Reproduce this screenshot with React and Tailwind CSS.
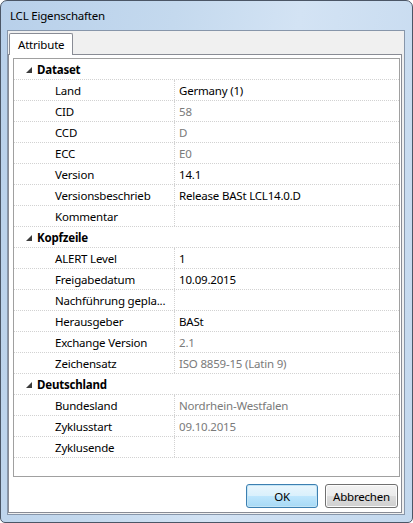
import React from 'react';

const rows = [
  { cat: 'Dataset' },
  { name: 'Land', value: 'Germany (1)' },
  { name: 'CID', value: '58', ro: true },
  { name: 'CCD', value: 'D', ro: true },
  { name: 'ECC', value: 'E0', ro: true },
  { name: 'Version', value: '14.1' },
  { name: 'Versionsbeschrieb', value: 'Release BASt LCL14.0.D' },
  { name: 'Kommentar', value: '' },
  { cat: 'Kopfzeile' },
  { name: 'ALERT Level', value: '1' },
  { name: 'Freigabedatum', value: '10.09.2015' },
  { name: 'Nachführung gepla...', value: '' },
  { name: 'Herausgeber', value: 'BASt' },
  { name: 'Exchange Version', value: '2.1', ro: true },
  { name: 'Zeichensatz', value: 'ISO 8859-15 (Latin 9)', ro: true },
  { cat: 'Deutschland' },
  { name: 'Bundesland', value: 'Nordrhein-Westfalen', ro: true },
  { name: 'Zyklusstart', value: '09.10.2015', ro: true },
  { name: 'Zyklusende', value: '' },
];

const Expanded = () => (
  <svg width="6" height="6" viewBox="0 0 6 6" className="shrink-0">
    <polygon points="6,0 6,6 0,6" fill="#3b3b3b" />
  </svg>
);

const GridRow = ({ row }) => {
  if (row.cat) {
    return (
      <div className="flex h-[21px] items-center border-b border-dotted border-[#d2d2d2] pl-[12px] pt-[1px]">
        <Expanded />
        <span className="ml-[5px] font-bold text-black">{row.cat}</span>
      </div>
    );
  }
  return (
    <div className="flex h-[21px] border-b border-dotted border-[#d2d2d2]">
      <div className="flex w-[161px] shrink-0 items-center whitespace-nowrap border-r border-dotted border-[#d2d2d2] pl-[41px] pt-[2px] text-black">
        {row.name}
      </div>
      <div className={`flex items-center whitespace-nowrap pl-[4px] pt-[2px] ${row.ro ? 'text-[#7a7a7a]' : 'text-black'}`}>
        {row.value}
      </div>
    </div>
  );
};

export default function App() {
  return (
    <div className="h-[523px] w-[413px] bg-white">
      <div className="flex h-[523px] w-[413px] flex-col rounded-t-[7px] rounded-b-[5px] border border-[#4b5666] bg-[linear-gradient(100deg,#b8d0ea_0%,#c4d9ee_35%,#d3e3f4_60%,#c3d8ee_100%)] font-['Noto_Sans',sans-serif] text-[11.5px] leading-none tracking-[-0.2px]">
        <div className="flex h-[29px] items-center pl-[9px] pt-[1px] text-black">LCL Eigenschaften</div>

        <div className="ml-[6px] flex h-[485px] w-[398px] flex-col border border-[#8796aa] bg-[#f0f0f0]">
          <div className="flex h-[23px] items-end pl-[1px]">
            <div className="relative z-10 -mb-px flex h-[22px] w-[64px] items-center rounded-t-[2px] border border-b-0 border-[#898c95] bg-white pl-[8px] pt-[1px] text-black">
              Attribute
            </div>
          </div>

          <div className="mb-[1px] mr-[2px] flex flex-1 flex-col border border-[#898c95] bg-white">
            <div className="ml-[4px] mr-[1px] mt-[3px] flex h-[419px] flex-col border border-[#a0a0a0]">
              {rows.map((r, i) => (
                <GridRow key={i} row={r} />
              ))}
            </div>

            <div className="mr-[3px] mt-[7px] flex justify-end gap-[7px]">
              <button className="flex h-[24px] w-[72px] items-center justify-center rounded-[3px] border border-[#3c7fb1] bg-[linear-gradient(to_bottom,#eaf6fd_0%,#d9f0fc_50%,#bee6fd_50%,#a7d9f5_100%)] pt-[1px] text-black shadow-[inset_0_0_0_1px_#c4e5f6]">
                OK
              </button>
              <button className="flex h-[24px] w-[73px] items-center justify-center rounded-[3px] border border-[#707070] bg-[linear-gradient(to_bottom,#f2f2f2_0%,#ebebeb_50%,#dddddd_50%,#cfcfcf_100%)] pt-[1px] text-black shadow-[inset_0_0_0_1px_#fcfcfc]">
                Abbrechen
              </button>
            </div>
          </div>
        </div>
      </div>
    </div>
  );
}
